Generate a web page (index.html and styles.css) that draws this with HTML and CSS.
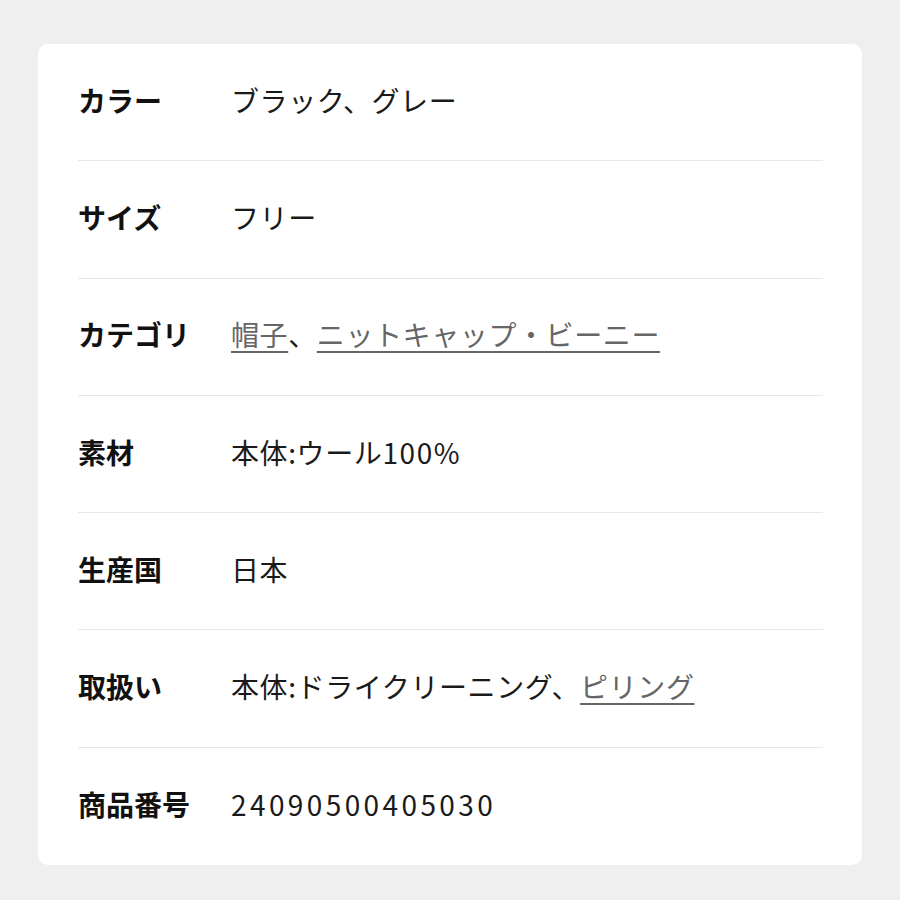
FILE: index.html
```html
<!DOCTYPE html>
<html lang="ja">
<head>
<meta charset="utf-8">
<link rel="stylesheet" href="styles.css">
</head>
<body>
<div class="card">
  <div class="row"><div class="label">カラー</div><div class="value">ブラック、グレー</div></div>
  <div class="row"><div class="label">サイズ</div><div class="value">フリー</div></div>
  <div class="row"><div class="label">カテゴリ</div><div class="value"><a class="link" href="#">帽子</a>、<a class="link" href="#">ニットキャップ・ビーニー</a></div></div>
  <div class="row"><div class="label">素材</div><div class="value">本体:ウール<span class="pct">100%</span></div></div>
  <div class="row"><div class="label">生産国</div><div class="value">日本</div></div>
  <div class="row"><div class="label">取扱い</div><div class="value">本体:ドライクリーニング、<a class="link" href="#">ピリング</a></div></div>
  <div class="row"><div class="label">商品番号</div><div class="value"><span class="num">24090500405030</span></div></div>
</div>
</body>
</html>
```
FILE: styles.css
```css
html, body {
  margin: 0;
  padding: 0;
  background: #efefef;
}
body {
  padding: 44px 38px 36px 38px;
  font-family: "Noto Sans CJK JP", "Noto Sans", sans-serif;
}
.card {
  background: #ffffff;
  border-radius: 10px;
  padding: 0 39px 0 40px;
  width: 745px;
}
.row {
  display: flex;
  align-items: center;
  box-sizing: border-box;
  height: 117.3px;
  padding-bottom: 5px;
  border-bottom: 1px solid #e6e6e6;
}
.row:last-child {
  border-bottom: none;
}
.label {
  width: 153px;
  flex: none;
  font-size: 28px;
  font-weight: 700;
  color: #111;
}
.value {
  font-size: 28px;
  color: #1a1a1a;
  letter-spacing: 0.6px;
}
.num {
  letter-spacing: 3.4px;
}
.pct {
  letter-spacing: 1.6px;
}
.link {
  color: #666;
  text-decoration: underline;
  text-underline-offset: 5px;
  text-decoration-thickness: 2px;
}
```
